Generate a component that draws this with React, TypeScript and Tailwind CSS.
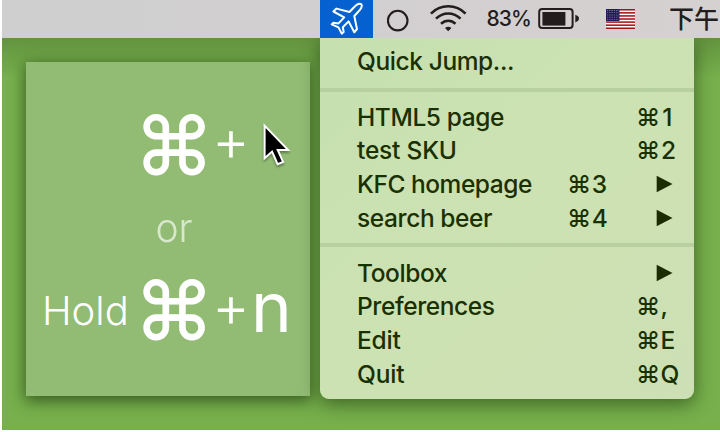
import React from "react";

const Row = ({ label, keys, arrow, tracking = "tracking-[-0.2px]", keyTracking = "tracking-[0.3px]" }: { label: string; keys?: string; arrow?: boolean; tracking?: string; keyTracking?: string }) => (
  <div className="flex h-[33.7px] items-center pl-[37px]">
    <span className={"w-[210px] whitespace-nowrap " + tracking}>{label}</span>
    <span className="w-[69px] whitespace-nowrap tracking-[0.5px]">{arrow ? keys : ""}</span>
    {arrow ? (
      <svg className="ml-[20px] h-[18px] w-[17px]" viewBox="0 0 17 18"><path d="M.7 .7V17.3L16.5 9Z" fill="#1b2c00" /></svg>
    ) : (
      <span className={"whitespace-nowrap " + keyTracking}>{keys}</span>
    )}
  </div>
);

const Separator = () => <div className="h-1 w-full bg-[#b8cf9f]" />;

const stars = Array.from({ length: 35 }, (_, i) => ({ x: 1.5 + (i % 7) * 1.75, y: 1.5 + Math.floor(i / 7) * 2.2 }));

export default function App() {
  return (
    <div className="h-[432px] w-[720px] overflow-hidden bg-white pl-[2px] font-['Inter','Noto_Sans_CJK_SC',sans-serif]">
      <div className="flex h-[430px] w-[718px] flex-col overflow-hidden bg-[#77b04c]">
        <header className="z-20 flex h-[38px] shrink-0 items-center bg-linear-to-r from-[#cfcfcf] via-[#d2cfd0] to-[#d6d1d1] text-[#231d1d]">
          <div className="ml-[318px] h-[38px] w-[53px] shrink-0 bg-[#0561d0]">
            <svg className="h-[38px] w-[53px]" viewBox="0 0 53 38" fill="none" stroke="white" strokeWidth="2" strokeLinejoin="round">
              <path d="M41.3 4.2C39.3 3 36 5 33.5 7.8L29.5 12L16.5 8.6L13.4 11.5L24.2 17.4L18.5 23.4L13.4 22.7L11.7 24.4L18.5 27.4L21.7 33.6L23.7 32L22.8 27.2L28.6 21.4L34.3 32.3L37 29.2L34.3 16L38 12C41 9.2 42.8 5.6 41.3 4.2Z" />
            </svg>
          </div>
          <svg className="ml-[13.5px] h-[38px] w-[22px] shrink-0" viewBox="0 0 22 38" fill="none" stroke="currentColor" strokeWidth="2.1"><circle cx="10.7" cy="20.6" r="9.8" /></svg>
          <svg className="ml-[21.5px] h-[38px] w-[38px] shrink-0" viewBox="0 0 38 38" fill="none" stroke="currentColor" strokeWidth="2.6">
            <path d="M.9 13.6C10.5 3.8 26 3.8 35.6 13.6M6 18.7C13 11.7 23.5 11.7 30.5 18.7M11 23.8C15.3 19.8 21.2 19.8 25.5 23.8" />
            <path d="M15 28Q18.2 25.4 21.4 28L18.2 31.2Z" fill="currentColor" stroke="none" />
          </svg>
          <span className="ml-[18.5px] w-[50px] shrink-0 text-[21px] font-medium tracking-[-0.9px]">83%</span>
          <svg className="ml-[1px] h-[38px] w-[42px] shrink-0" viewBox="0 0 42 38">
            <rect x="1.2" y="9" width="33.4" height="19" rx="3" fill="none" stroke="currentColor" strokeWidth="2" />
            <rect x="4.4" y="12" width="23" height="13.6" fill="currentColor" />
            <path d="M37.3 14.8Q41 16 41 18.6T37.3 22.4Z" fill="currentColor" />
          </svg>
          <svg className="ml-[26px] h-[20px] w-[29px] shrink-0" viewBox="0 0 29 20">
            <rect width="29" height="20" fill="#fff" />
            {[0, 1, 2, 3, 4, 5, 6].map((i) => <rect key={i} y={i * 3.08} width="29" height="1.54" fill="#a71318" />)}
            <rect width="13.5" height="12" fill="#211b5b" />
            {stars.map((s, i) => <circle key={i} cx={s.x} cy={s.y} r=".4" fill="#ddd" />)}
          </svg>
          <span className="ml-[34.5px] whitespace-nowrap text-[25px] font-medium leading-[38px]">下午</span>
        </header>
        <main className="flex h-[392px] items-start bg-[linear-gradient(180deg,#63933f_0px,#6ba145_18px,#77b04c_40px)]">
          <section className="ml-[24px] mt-[24px] flex h-[334px] w-[284px] shrink-0 flex-col bg-[#92bc74] text-white shadow-[0_4px_14px_1px_rgba(30,55,15,0.7)]">
            <div className="mt-[40px] flex h-[84px] items-center">
              <span className="ml-[108px] w-[78px] text-[81px] font-medium leading-[84px] mt-[2px]">⌘</span>
              <span className="w-[48px] text-[58px] leading-[84px] font-light -mt-[9px]">+</span>
              <svg className="h-[50px] w-[34px] mt-[8px] drop-shadow-[0_2px_1px_rgba(0,0,0,0.35)]" viewBox="0 0 34 50"><path d="M4.6 2.6V35.2L12.1 28.6L17.6 41.2L23.1 38.9L17.7 27H28.2Z" fill="black" stroke="white" strokeWidth="2" /></svg>
            </div>
            <div className="ml-[129.5px] mt-[20px] h-[44px] text-[39px] font-light leading-[44px] opacity-65">or</div>
            <div className="mt-[17px] flex h-[84px] items-center">
              <span className="ml-[16px] w-[92px] text-[40px] font-light mt-[4px]">Hold</span>
              <span className="w-[78px] text-[81px] font-medium leading-[84px] mt-[1px]">⌘</span>
              <span className="w-[39px] text-[58px] leading-[84px] font-light -mt-[7px]">+</span>
              <span className="text-[69px] font-normal leading-[84px] -mt-[4px]">n</span>
            </div>
          </section>
          <nav className="ml-[10px] h-[361px] w-[374px] shrink-0 overflow-hidden rounded-b-[9px] bg-linear-to-br from-[#c6e0b0] via-[#cde2b2] to-[#cde0b5] pt-[6px] text-[24.5px] font-[450] leading-[34px] text-[#1b3000] shadow-[0_5px_18px_1px_rgba(30,60,15,0.6)]">
            <Row label="Quick Jump..." tracking="tracking-[-0.4px]" />
            <div className="h-[10px]" />
            <Separator />
            <div className="h-[8px]" />
            <Row label="HTML5 page" keys="⌘1" tracking="tracking-[-0.4px]" keyTracking="tracking-[2px]" />
            <Row label="test SKU" keys="⌘2" keyTracking="tracking-[0.8px]" />
            <Row label="KFC homepage" keys="⌘3" arrow tracking="tracking-[-0.45px]" />
            <Row label="search beer" keys="⌘4" arrow tracking="tracking-[-0.4px]" />
            <div className="h-[9px]" />
            <Separator />
            <div className="h-[8.4px]" />
            <Row label="Toolbox" arrow tracking="tracking-[-0.4px]" />
            <Row label="Preferences" keys="⌘," tracking="tracking-[-0.4px]" />
            <Row label="Edit" keys="⌘E" />
            <Row label="Quit" keys="⌘Q" />
          </nav>
        </main>
      </div>
    </div>
  );
}
